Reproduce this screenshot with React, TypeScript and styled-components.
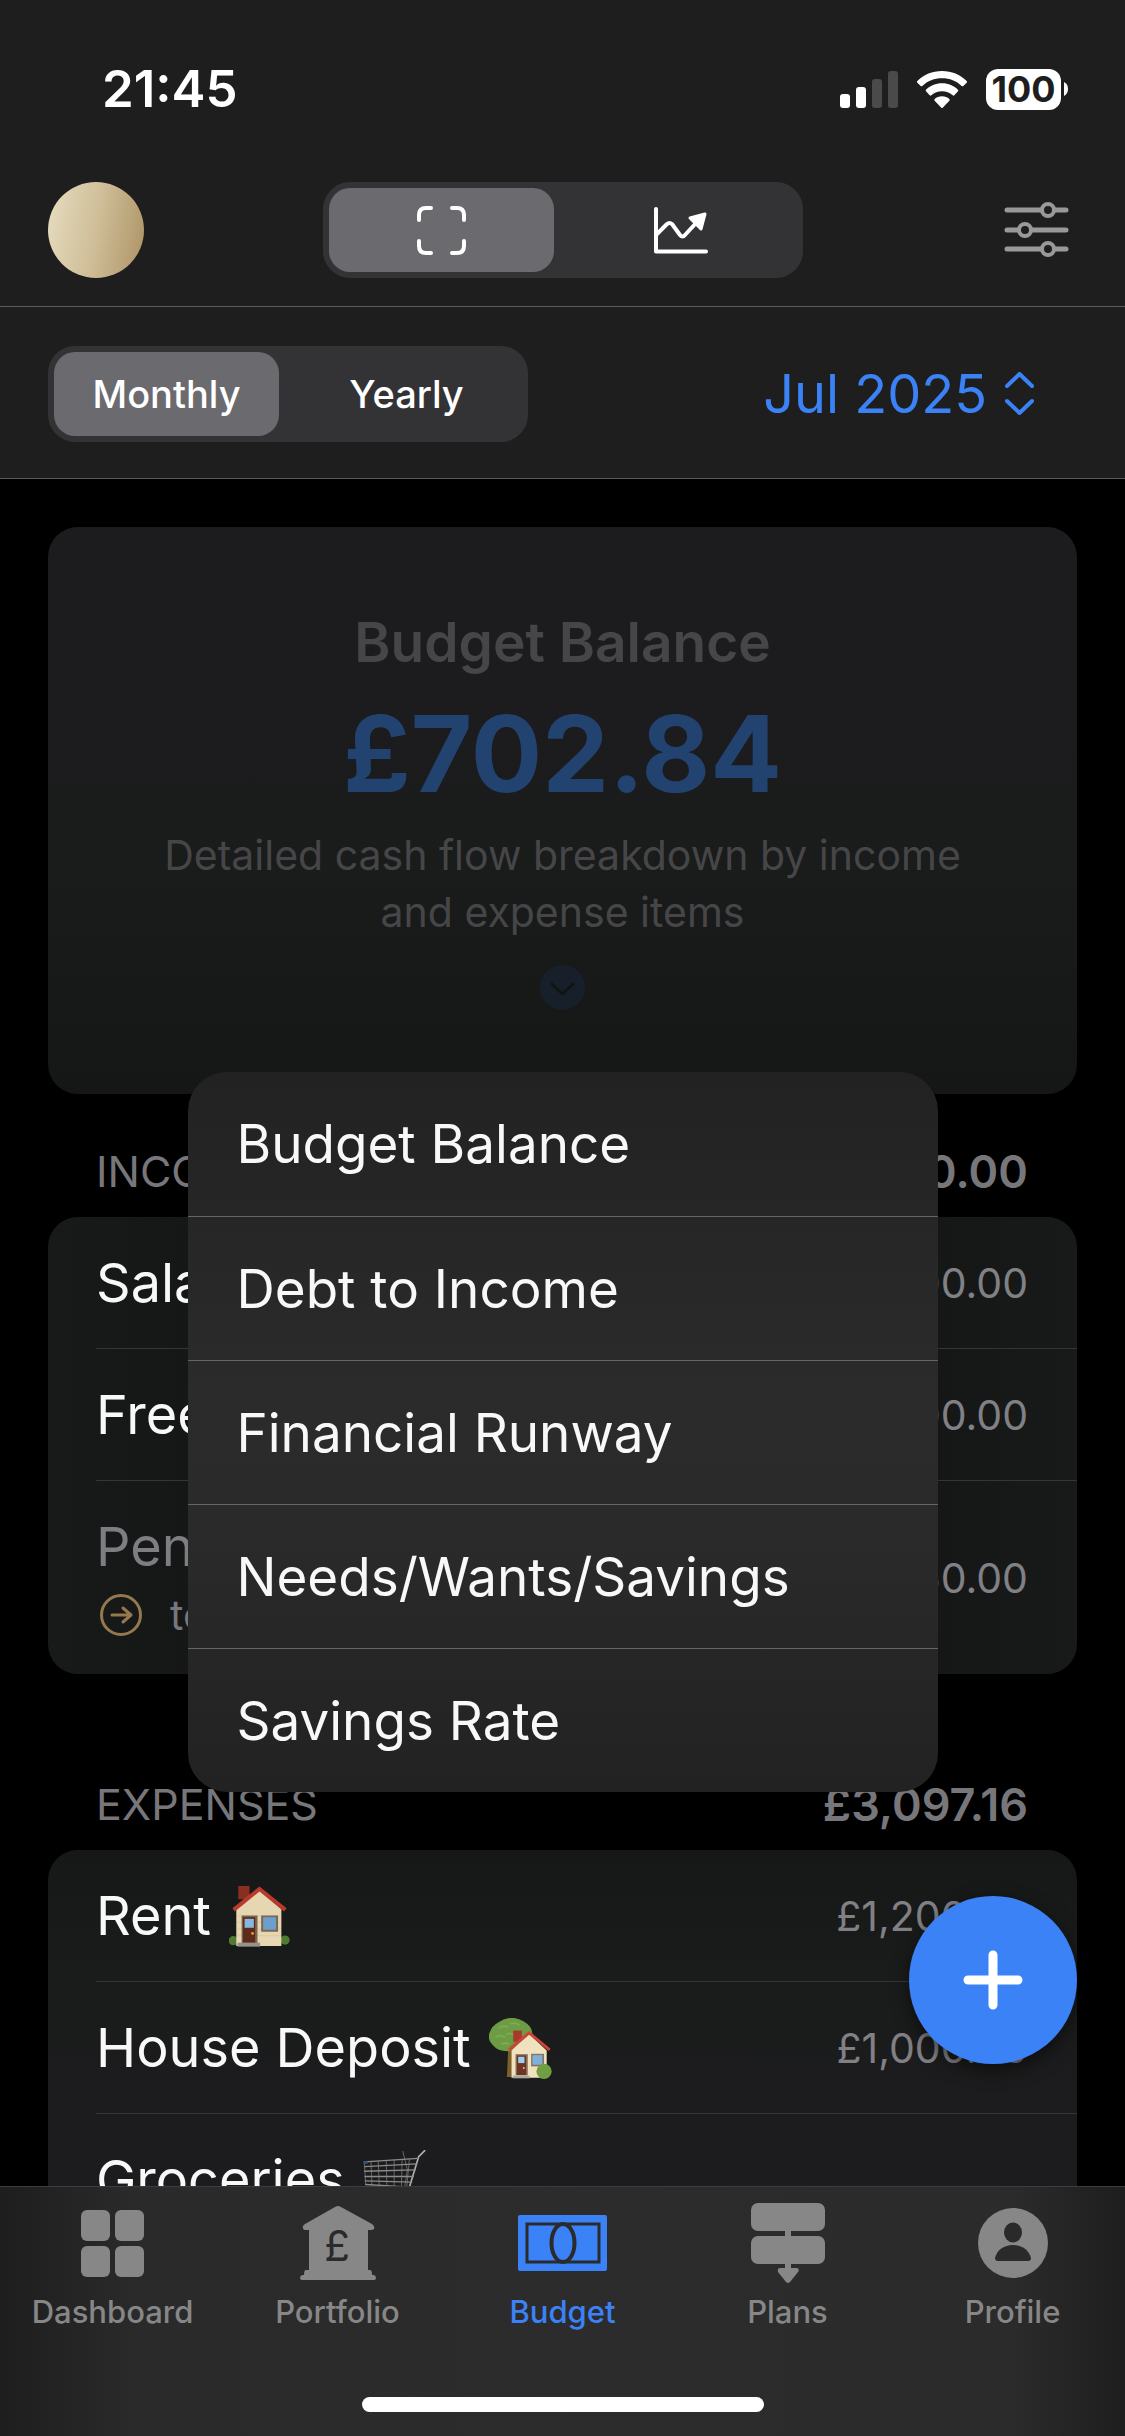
import React, { useState } from "react";
import styled, { createGlobalStyle } from "styled-components";

const BLUE = "#3b82f6";

const GlobalStyle = createGlobalStyle`
  *, *::before, *::after { box-sizing: border-box; }
  body {
    margin: 0;
    background: #000;
    color: #fff;
    font-family: Inter, "Liberation Sans", sans-serif;
    font-size: 54px;
  }
  button { border: 0; margin: 0; padding: 0; background: none; color: inherit; font: inherit; cursor: pointer; }
  h1, h2, p, ul { margin: 0; padding: 0; font: inherit; list-style: none; }
  svg { display: block; flex: none; }
`;

const Screen = styled.div`
  display: flex;
  flex-direction: column;
  height: 100vh;
  overflow: hidden;
`;

const Header = styled.header`
  flex: none;
  background: #1e1e1e;
`;

const StatusBar = styled.div`
  display: flex;
  align-items: center;
  justify-content: space-between;
  height: 178px;
  padding: 0 57px 0 102px;
`;

const Clock = styled.time`
  font-size: 51px;
  font-weight: 600;
  line-height: 60px;
`;

const StatusIcons = styled.div`
  display: flex;
  align-items: center;
  gap: 19px;
`;

const Battery = styled.div`
  display: flex;
  align-items: center;
  gap: 3px;
`;

const BatteryLevel = styled.span`
  width: 75px;
  border-radius: 12px;
  background: #fff;
  color: #1e1e1e;
  font-size: 36px;
  font-weight: 700;
  line-height: 41px;
  text-align: center;
`;

const TopBar = styled.div`
  display: grid;
  grid-template-columns: 1fr 480px 1fr;
  align-items: center;
  height: 129px;
  padding: 2px 48px 26px;
  border-bottom: 1px solid #5b5b5e;
`;

const Avatar = styled.button`
  width: 96px;
  height: 96px;
  border-radius: 50%;
  background: linear-gradient(100deg, #e4dabd 5%, #cfbe98 50%, #b0976a 95%);
`;

const IconButton = styled.button`
  justify-self: end;
  padding-right: 8px;
`;

const Segmented = styled.div`
  display: grid;
  grid-template-columns: 225px 1fr;
  gap: 12px;
  width: 480px;
  height: 96px;
  padding: 6px;
  border-radius: 27px;
  background: #333335;
`;

const Segment = styled.button<{ $on: boolean }>`
  display: flex;
  align-items: center;
  justify-content: center;
  border-radius: 21px;
  background: ${(p) => (p.$on ? "#6b6a6f" : "transparent")};
  font-size: 38px;
  font-weight: 500;
`;

const FilterBar = styled.div`
  display: flex;
  align-items: center;
  justify-content: space-between;
  height: 172px;
  padding: 2px 91px 0 48px;
  border-bottom: 1px solid #5b5b5e;
`;

const PeriodButton = styled.button`
  display: flex;
  align-items: center;
  gap: 18px;
  color: ${BLUE};
  font-size: 54px;
`;

const Main = styled.main`
  position: relative;
  flex: 1;
  min-height: 0;
  padding: 48px 48px 0;
  overflow: hidden;
`;

const Summary = styled.section`
  position: relative;
`;

const SummaryCard = styled.div`
  display: flex;
  flex-direction: column;
  align-items: center;
  padding: 80px 100px 84px;
  border-radius: 30px;
  background: linear-gradient(#1c1c1e 30%, #1a1b1b 60%, #151716);
  color: #464648;
  text-align: center;
`;

const SummaryTitle = styled.h1`
  font-size: 55px;
  font-weight: 600;
  line-height: 70px;
`;

const SummaryValue = styled.p`
  margin: 16px 0 12px;
  color: #224270;
  font-size: 106px;
  font-weight: 700;
  line-height: 122px;
`;

const SummaryText = styled.p`
  margin-bottom: 24px;
  font-size: 41px;
  line-height: 57px;
`;

const Menu = styled.div`
  position: absolute;
  z-index: 2;
  top: calc(100% - 22px);
  left: 0;
  right: 0;
  width: 750px;
  margin: 0 auto;
  border-radius: 39px;
  overflow: hidden;
  background: linear-gradient(#222222, #2b2b2c 45%, #2a2a2b 65%, #222222);
`;

const MenuItem = styled.button`
  display: block;
  width: 100%;
  height: 144px;
  padding: 0 49px;
  color: #f8f8f8;
  font-size: 53px;
  text-align: left;

  & + & { border-top: 1px solid #656566; }
`;

const Group = styled.section`
  margin-bottom: 53px;
`;

const GroupHeader = styled.header`
  display: flex;
  justify-content: space-between;
  padding: 50px 49px 18px 48px;
  color: #77777b;
  font-size: 43px;
  line-height: 55px;
`;

const GroupTitle = styled.h2`
  text-transform: uppercase;
`;

const GroupTotal = styled.strong`
  font-size: 45px;
  font-weight: 600;
`;

const List = styled.ul<{ $fade?: boolean }>`
  padding-left: 48px;
  border-radius: 30px;
  background: ${(p) =>
    p.$fade
      ? "linear-gradient(#161817, #1a1b1b 130px, #1c1c1e 280px)"
      : "linear-gradient(90deg, #181a19, #141615 20%, #141615 80%, #181a19)"};
`;

const Row = styled.li`
  display: flex;
  align-items: center;
  justify-content: space-between;
  padding: 29px 49px 28px 0;

  & + & { box-shadow: 0 -1px #343536; margin-top: 1px; }
`;

const Name = styled.div<{ $muted?: boolean }>`
  display: flex;
  align-items: center;
  gap: 18px;
  color: ${(p) => (p.$muted ? "#7e7e82" : "#f8f8f8")};
  line-height: 74px;
`;

const Transfer = styled.div`
  display: flex;
  align-items: center;
  gap: 28px;
  padding-left: 4px;
  color: #77777b;
  font-size: 41px;
  line-height: 62px;
`;

const Amount = styled.span`
  color: #808085;
  font-size: 41px;
`;

const AddButton = styled.button`
  position: absolute;
  z-index: 3;
  right: 48px;
  bottom: 122px;
  display: grid;
  place-items: center;
  width: 168px;
  height: 168px;
  border-radius: 50%;
  background: ${BLUE};
  box-shadow: 0 6px 18px rgba(0, 0, 0, 0.5);
`;

const TabBar = styled.nav`
  flex: none;
  height: 250px;
  border-top: 1px solid #3d3d3f;
  background: linear-gradient(90deg, #1e1e1e, #2a2a2a 12%, #2c2c2c 50%, #2b2b2b 90%, #1e1e1e);
`;

const Tabs = styled.div`
  display: grid;
  grid-template-columns: repeat(5, 1fr);
`;

const Tab = styled.a<{ $on?: boolean }>`
  display: flex;
  flex-direction: column;
  align-items: center;
  padding-top: 13px;
  color: ${(p) => (p.$on ? BLUE : "#878787")};
  font-size: 31px;
  font-weight: 500;
  line-height: 40px;
  text-decoration: none;
`;

const TabIcon = styled.span`
  display: flex;
  align-items: center;
  height: 86px;
  margin-bottom: 6px;
`;

const HomeIndicator = styled.div`
  width: 402px;
  height: 15px;
  margin: 65px auto 0;
  border-radius: 8px;
  background: #fff;
`;

const SignalIcon = () => (
  <svg width="58" height="37" viewBox="0 0 58 37" fill="#fff">
    <rect y="23" width="10" height="14" rx="3" />
    <rect x="16" y="16" width="10" height="21" rx="3" />
    <rect x="32" y="8" width="10" height="29" rx="3" fill="#4a4a4a" />
    <rect x="48" width="10" height="37" rx="3" fill="#4a4a4a" />
  </svg>
);

const WifiIcon = () => (
  <svg width="50" height="37" viewBox="0 0 150 111" fill="#fff">
    <path d="M75 0C104 0 130 11 149 30Q151 32 149 35L139 45Q137 47 134 45C118 30 98 22 75 22S32 30 16 45Q13 47 11 45L1 35Q-1 32 1 30C20 11 46 0 75 0Z" />
    <path d="M75 37C94 37 111 45 123 56Q125 58 123 61L112 73Q110 75 107 73C98 65 87 61 75 61S52 65 43 73Q40 75 38 73L27 61Q25 58 27 56C39 45 56 37 75 37Z" />
    <path d="M75 76C84 76 91 79 97 84Q99 87 97 89L77 110Q75 112 73 110L53 89Q51 87 53 84C59 79 66 76 75 76Z" />
  </svg>
);

const FrameIcon = () => (
  <svg width="49" height="49" viewBox="0 0 49 49" fill="none" stroke="#fff" strokeWidth="4" strokeLinecap="round">
    <path d="M2 14V9Q2 2 9 2H14M35 2H40Q47 2 47 9V14M47 35V40Q47 47 40 47H35M14 47H9Q2 47 2 40V35" />
  </svg>
);

const TrendIcon = () => (
  <svg width="54" height="47" viewBox="0 0 54 47" fill="none" stroke="#fff" strokeWidth="4" strokeLinecap="round" strokeLinejoin="round">
    <path d="M2 2V44.500H52M2 28L13 17Q15.500 15 18 17L26 28Q28.500 31 31 28L43 15" />
    <path d="M51 7L36 11L47 22Z" fill="#fff" strokeWidth="3" />
  </svg>
);

const SlidersIcon = () => (
  <svg width="65" height="56" viewBox="0 0 65 56" fill="#1e1e1e" stroke="#999" strokeWidth="5" strokeLinecap="round">
    <path d="M3 8H62M3 28H62M3 47H62" />
    <g strokeWidth="4">
      <circle cx="44" cy="8" r="6" />
      <circle cx="21" cy="28" r="6" />
      <circle cx="44" cy="47" r="6" />
    </g>
  </svg>
);

const UpDownIcon = () => (
  <svg width="29" height="43" viewBox="0 0 29 43" fill="none" stroke="currentColor" strokeWidth="4" strokeLinecap="round" strokeLinejoin="round">
    <path d="M2 14L14.500 2L27 14M2 29L14.500 41L27 29" />
  </svg>
);

const ExpandIcon = () => (
  <svg width="45" height="45" viewBox="0 0 45 45" fill="none">
    <circle cx="22.500" cy="22.500" r="22.500" fill="#17202a" />
    <path d="M12 19L22.500 29L33 19" stroke="#121414" strokeWidth="3" strokeLinecap="round" strokeLinejoin="round" />
  </svg>
);

const ArrowIcon = () => (
  <svg width="42" height="42" viewBox="0 0 42 42" fill="none" stroke="#94794f" strokeWidth="3" strokeLinecap="round" strokeLinejoin="round">
    <circle cx="21" cy="21" r="19.500" />
    <path d="M12 21H31M23 14L31 21L23 28" />
  </svg>
);

const PlusIcon = () => (
  <svg width="60" height="60" viewBox="0 0 60 60" stroke="#fff" strokeWidth="9" strokeLinecap="round">
    <path d="M30 5V55M5 30H55" />
  </svg>
);

const HouseEmoji = () => (
  <svg width="61" height="61" viewBox="0 0 184 184" role="img" aria-label="House">
    <path d="M28 0H62V40H28Z" fill="#8a2f20" />
    <circle cx="13" cy="165" r="14" fill="#4f7a30" />
    <circle cx="169" cy="163" r="14" fill="#4f7a30" />
    <path d="M22 70L92 12L158 70V181H22Z" fill="#e6d6b2" />
    <path d="M24 90H156M24 110H156M24 130H156M24 150H156" stroke="#d6c49d" strokeWidth="2" />
    <path d="M14 72L92 9L170 72" fill="none" stroke="#b93a2d" strokeWidth="12" />
    <path d="M38 89H86V172H38Z" fill="#7c6650" />
    <path d="M42 94H79V171H42Z" fill="#5f2a1a" />
    <path d="M47 99H75V126H47Z" fill="#85b8e0" />
    <circle cx="71" cy="143" r="4" fill="#e0a94a" />
    <path d="M97 89H148V138H97Z" fill="#7c6650" />
    <path d="M103 94H142V132H103Z" fill="#6c9fcd" />
    <path d="M26 171H94V183H26Z" fill="#96918b" />
  </svg>
);

const GardenEmoji = () => (
  <svg width="63" height="61" viewBox="0 0 190 184" role="img" aria-label="House with garden">
    <path d="M58 90H80V178H54Z" fill="#7d5f28" />
    <path d="M30 12Q68 -12 104 10Q136 28 130 60L60 100Q30 100 18 88Q-8 66 2 44Q8 24 30 12Z" fill="#6d9c45" />
    <path d="M30 30Q44 20 58 28M64 18Q80 12 92 22M20 58Q34 48 48 58M52 50Q66 42 76 52M36 80Q48 72 60 80" fill="none" stroke="#7dad50" strokeWidth="5" />
    <path d="M73 38H99V72H73Z" fill="#a83a2c" />
    <path d="M68 98L121 48L174 98V180H68Z" fill="#f0e2be" />
    <path d="M60 96L121 45L183 96" fill="none" stroke="#cc4436" strokeWidth="9" />
    <path d="M80 109H117V173H80Z" fill="#8a735c" />
    <path d="M84 113H112V172H84Z" fill="#6d3423" />
    <path d="M88 117H107V136H88Z" fill="#9ccdf0" />
    <circle cx="105" cy="151" r="3" fill="#f2c35a" />
    <path d="M127 108H166V146H127Z" fill="#8a735c" />
    <path d="M131 112H161V141H131Z" fill="#7db0da" />
    <path d="M72 174H122V182H72Z" fill="#aaa59e" />
    <circle cx="166" cy="161" r="23" fill="#6f9f42" />
  </svg>
);

const CartEmoji = () => (
  <svg width="63" height="61" viewBox="0 0 190 184" role="img" aria-label="Shopping cart" fill="none" stroke="#8c8c8c" strokeWidth="4" strokeLinecap="round">
    <path d="M186 2L168 20L140 112" stroke="#b0b0b0" strokeWidth="5" />
    <path d="M4 36L166 25M5 50L162 42M5 64L158 60M6 80L152 80M7 93L147 97M8 104L141 112L150 140H30" />
    <path d="M4 38L8 104M24 36L27 106M46 34L49 107M70 32L72 108M94 30L94 109M118 29L116 110M140 28L132 111M120 4L134 60L126 110" strokeWidth="2" />
    <path d="M1 38H14" stroke="#2f4f78" strokeWidth="8" strokeLinecap="butt" />
    <circle cx="40" cy="165" r="10" />
    <circle cx="140" cy="165" r="10" />
  </svg>
);

const DashboardIcon = () => (
  <svg width="63" height="67" viewBox="0 0 63 67" fill="currentColor">
    <rect width="29" height="31" rx="6" />
    <rect x="34" width="29" height="31" rx="6" />
    <rect y="36" width="29" height="31" rx="6" />
    <rect x="34" y="36" width="29" height="31" rx="6" />
  </svg>
);

const PortfolioIcon = () => (
  <svg width="76" height="74" viewBox="0 0 76 74" fill="currentColor">
    <path d="M35 1Q38-1 41 1L72 18Q75 20 74 23Q73 24 71 24H68V64H70Q72 64 72 69H74Q76 70 76 72Q76 74 74 74H2Q0 74 0 72Q0 70 2 69H4Q4 64 6 64H9V24H6Q3 24 3 22Q2 20 5 18Z" />
    <text x="37" y="55" textAnchor="middle" fontSize="42" fontWeight="400" fill="#2a2a2a">£</text>
  </svg>
);

const BudgetIcon = () => (
  <svg width="89" height="56" viewBox="0 0 89 56" fill="none" stroke="#2b2b2c" strokeWidth="3">
    <rect width="89" height="56" rx="2" fill="currentColor" stroke="none" />
    <rect x="9" y="9" width="72" height="38" />
    <ellipse cx="45" cy="28" rx="11.500" ry="19" strokeWidth="4" />
  </svg>
);

const PlansIcon = () => (
  <svg width="74" height="80" viewBox="0 0 74 80" fill="currentColor">
    <rect width="74" height="28" rx="7" />
    <rect y="33" width="74" height="28" rx="7" />
    <path d="M34 26H40V34H34ZM34 60H40V65H46Q49 66 47 69L39 79Q37 81 35 79L27 69Q26 65 29 65H34Z" />
  </svg>
);

const ProfileIcon = () => (
  <svg width="70" height="70" viewBox="0 0 70 70">
    <circle cx="35" cy="35" r="35" fill="currentColor" />
    <ellipse cx="35" cy="24.500" rx="9" ry="10" fill="#2a2a2a" />
    <path d="M20 53Q17 53 17 50C19 42 26 37 35 37S51 42 53 50Q53 53 50 53Z" fill="#2a2a2a" />
  </svg>
);

const menuItems = ["Budget Balance", "Debt to Income", "Financial Runway", "Needs/Wants/Savings", "Savings Rate"];

const expenses = [
  { name: "Rent", amount: "£1,200.00", icon: <HouseEmoji /> },
  { name: "House Deposit", amount: "£1,000.00", icon: <GardenEmoji /> },
  { name: "Groceries", amount: "", icon: <CartEmoji /> },
];

const tabs = [
  { name: "Dashboard", icon: <DashboardIcon /> },
  { name: "Portfolio", icon: <PortfolioIcon /> },
  { name: "Budget", icon: <BudgetIcon /> },
  { name: "Plans", icon: <PlansIcon /> },
  { name: "Profile", icon: <ProfileIcon /> },
];

export default function App() {
  const [view, setView] = useState("overview");
  const [period, setPeriod] = useState("monthly");

  return (
    <Screen>
      <GlobalStyle />
      <Header>
        <StatusBar>
          <Clock>21:45</Clock>
          <StatusIcons>
            <SignalIcon />
            <WifiIcon />
            <Battery>
              <BatteryLevel>100</BatteryLevel>
              <svg width="4" height="14" viewBox="0 0 4 14" fill="#fff"><path d="M0 0Q4 2 4 7T0 14Z" /></svg>
            </Battery>
          </StatusIcons>
        </StatusBar>
        <TopBar>
          <Avatar aria-label="Account" />
          <Segmented>
            <Segment $on={view === "overview"} aria-label="Overview" onClick={() => setView("overview")}><FrameIcon /></Segment>
            <Segment $on={view === "trend"} aria-label="Trend" onClick={() => setView("trend")}><TrendIcon /></Segment>
          </Segmented>
          <IconButton aria-label="Filters"><SlidersIcon /></IconButton>
        </TopBar>
        <FilterBar>
          <Segmented>
            <Segment $on={period === "monthly"} onClick={() => setPeriod("monthly")}>Monthly</Segment>
            <Segment $on={period === "yearly"} onClick={() => setPeriod("yearly")}>Yearly</Segment>
          </Segmented>
          <PeriodButton>Jul 2025<UpDownIcon /></PeriodButton>
        </FilterBar>
      </Header>

      <Main>
        <Summary>
          <SummaryCard>
            <SummaryTitle>Budget Balance</SummaryTitle>
            <SummaryValue>£702.84</SummaryValue>
            <SummaryText>Detailed cash flow breakdown by income and expense items</SummaryText>
            <ExpandIcon />
          </SummaryCard>
          <Menu role="menu">
            {menuItems.map((item) => <MenuItem key={item} role="menuitem">{item}</MenuItem>)}
          </Menu>
        </Summary>

        <Group>
          <GroupHeader>
            <GroupTitle>Income</GroupTitle>
            <GroupTotal>£3,800.00</GroupTotal>
          </GroupHeader>
          <List>
            <Row><Name>Salary</Name><Amount>£3,000.00</Amount></Row>
            <Row><Name>Freelance</Name><Amount>£800.00</Amount></Row>
            <Row>
              <div>
                <Name $muted>Pension</Name>
                <Transfer><ArrowIcon />to Pension</Transfer>
              </div>
              <Amount>£150.00</Amount>
            </Row>
          </List>
        </Group>

        <Group>
          <GroupHeader>
            <GroupTitle>Expenses</GroupTitle>
            <GroupTotal>£3,097.16</GroupTotal>
          </GroupHeader>
          <List $fade>
            {expenses.map((e) => (
              <Row key={e.name}>
                <Name>{e.name}{e.icon}</Name>
                <Amount>{e.amount}</Amount>
              </Row>
            ))}
          </List>
        </Group>

        <AddButton aria-label="Add item"><PlusIcon /></AddButton>
      </Main>

      <TabBar>
        <Tabs>
          {tabs.map((t) => (
            <Tab key={t.name} href={"#" + t.name.toLowerCase()} $on={t.name === "Budget"}>
              <TabIcon>{t.icon}</TabIcon>
              {t.name}
            </Tab>
          ))}
        </Tabs>
        <HomeIndicator />
      </TabBar>
    </Screen>
  );
}
